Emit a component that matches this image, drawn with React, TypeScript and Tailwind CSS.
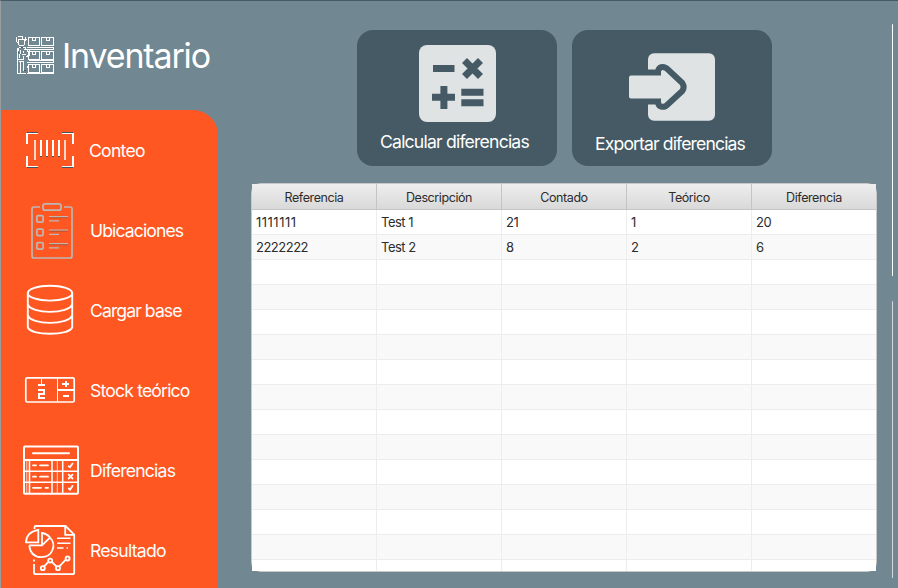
import type { ReactNode } from "react";

function WarehouseIcon() {
  const boxes = [37, 51, 64];
  return (
    <svg width="40" height="40" viewBox="15 35 40 40" fill="none" stroke="white" strokeWidth="1" shapeRendering="crispEdges" className="mb-[2px] shrink-0">
      {boxes.map((y) => (
        <g key={y}>
          <path d={`M28.5 ${y + 0.5}H39.5V${y + 8.5}H28.5ZM32.5 ${y + 0.5}V${y + 3.5}H35.5V${y + 0.5}`} />
          <path d={`M41.5 ${y + 0.5}H53.5V${y + 8.5}H41.5ZM46.5 ${y + 0.5}V${y + 3.5}H49.5V${y + 0.5}`} />
        </g>
      ))}
      <path d="M27 47.5H54M27 49.5H54M53.5 47V49M29 60.5H54M27 62.5H54M53.5 60V62M27 73.5H54" />
      <path d="M18 36.5H23M16.5 37V42M22.5 37V39M18 39.5H27M25.5 37V41M18.5 40V45M24.5 40V45M19 45.5H24M17 42.5H18M19 47.5H26M17.5 48V73M18.5 48V51M25.5 48V50M20.5 50V54M22 54.5H26M27.5 49V52M29.5 50V55M23.5 51V53M26 56.5H29M23.5 56V59M18 59.5H24M20.5 62V73M23.5 62V71M17 73.5H26M19 61.5H24" />
      <path d="M24 49.5H28M27 55.5H30M19.5 54V58M27.5 66V68" />
      <path stroke="#455a64" d="M24 70.5H26M21 47.5H23M18 52.5H19" />
    </svg>
  );
}

function ItemIcon({ children }: { children: ReactNode }) {
  return (
    <svg width="60" height="80" viewBox="20 0 60 80" fill="none" stroke="white" className="shrink-0">
      {children}
    </svg>
  );
}

const barcode = (
  <g shapeRendering="crispEdges">
    <path strokeWidth="1" stroke="#3f555f" d="M27 22.5H38M62 22.5H73M27 57.5H38M62 57.5H73M40 46.5H42M46 46.5H48M52 46.5H54M58 46.5H60" />
    <path strokeWidth="1" d="M27 23.5H38M62 23.5H73M27 56.5H38M62 56.5H73" />
    <path strokeWidth="2" d="M27 23V34M73 23V34M27 46V57M73 46V57M41 30V46M47 30V46M53 30V46M59 30V46" />
    <path strokeWidth="2" stroke="#ffd8cb" d="M35 30V50M65 30V50" />
  </g>
);

const clipboard = (
  <g stroke="#bdb8b5" strokeWidth="1.7">
    <path d="M40 17H34Q32 17 32 19V66Q32 68 34 68H70Q72 68 72 66V19Q72 17 70 17H64" />
    <rect x="43" y="13.8" width="18" height="6.4" rx="2" />
    {[25.7, 39.2, 52.7].map((y) => (
      <g key={y}>
        <rect x="36.9" y={y} width="6.2" height="6.4" rx="1.2" />
        <path strokeWidth="1.3" d={`M49 ${y + 1}H68M49 ${y + 5.2}H59`} />
        <path stroke="#8a4a35" strokeWidth="0.6" d={`M49 ${y + 2}H68`} />
      </g>
    ))}
  </g>
);

const database = (
  <g strokeWidth="1.9">
    <ellipse cx="50" cy="23.2" rx="22.2" ry="7.4" />
    <path d="M27.8 23V57C29 66 71 66 72.2 57V23M27.8 34C30 44.5 70 44.5 72.2 34M27.8 45C30 55.5 70 55.5 72.2 45" />
  </g>
);

const stock = (
  <g>
    <rect x="25.8" y="27.8" width="48.4" height="24.2" rx="1.5" strokeWidth="1.7" />
    <path strokeWidth="1" shapeRendering="crispEdges" d="M57.5 28V52" />
    <path strokeWidth="2" shapeRendering="crispEdges" d="M58 40H74" />
    <path strokeWidth="2" shapeRendering="crispEdges" d="M62 34H69M66 31V37M63 46H69" />
    <path strokeWidth="1" shapeRendering="crispEdges" d="M41.5 29V34" />
    <path strokeWidth="2" shapeRendering="crispEdges" d="M38 35H45M38 40H44M44 39V45M39 43V49M38 44H45M38 48H45" />
  </g>
);

const sheet = (
  <g strokeWidth="1.5" strokeLinecap="round">
    <rect x="24" y="16.5" width="54" height="47.2" rx="1" strokeWidth="2" />
    <path strokeWidth="2" d="M33 23.2H69M24 30H78" />
    <path strokeWidth="1.6" d="M24 41.3H78M24 52.3H78" />
    <path d="M29.5 30V63M52 30V63M62.7 30V63" />
    <path strokeWidth="1" opacity=".7" d="M57.3 30V63M26.8 30V63" />
    <path strokeWidth="1.8" d="M33 35.3H36M40 35.3H48M33 46.7H36M40 46.7H48M33 57.8H41M45.5 57.8H48" />
    <path strokeWidth="1.8" d="M68.7 36.2L70 37.2L72.5 33.6M68.7 58.5L70 59.6L72.5 56M68.7 44.7L72.5 48.5M72.5 44.7L68.7 48.5" />
  </g>
);

const report = (
  <g strokeWidth="1.8">
    <path d="M34.5 19V17.5Q34.5 16 36 16H65.5L74.2 24.7V62.5Q74.2 64.2 72.5 64.2H36Q34 64.2 34 62.5V54M34 49.5V51.5M65.2 16V24.8H74" />
    <path fill="#ff5722" d="M38.3 32.3H26Q26.2 22.2 38.3 19.8Z" />
    <path d="M29.2 35.3Q30.5 47 41.5 47.2C52.5 46.8 57 35 50 27.5L42 35.3H29.2M42 35.3V23Q46.5 23.4 50 27.5" />
    <path strokeWidth="1.6" d="M57 28.2H70.5M57 33.2H70.5M57 38H63.5M66.5 38H68" />
    <path d="M44 56.6L48.8 51.4M51.6 51.6L56.8 56.9M59.2 56.6L66.3 49.2" />
    <circle cx="42.8" cy="58.2" r="2" />
    <circle cx="50.2" cy="50.6" r="2" />
    <circle cx="58" cy="58.2" r="2" />
    <circle cx="67.6" cy="48.5" r="2" />
  </g>
);

const items = [
  { label: "Conteo", icon: barcode, text: "pl-[9px] tracking-[-0.75px]" },
  { label: "Ubicaciones", icon: clipboard, text: "pl-[10px] tracking-[-0.9px]" },
  { label: "Cargar base", icon: database, text: "pl-[10px] tracking-[-0.92px]" },
  { label: "Stock teórico", icon: stock, text: "pl-[10px] tracking-[-0.82px]" },
  { label: "Diferencias", icon: sheet, text: "pl-[10px] tracking-[-0.77px]" },
  { label: "Resultado", icon: report, text: "pl-[10px] tracking-[-0.75px]" },
];

const columns = ["Referencia", "Descripción", "Contado", "Teórico", "Diferencia"];
const rows = [
  ["1111111", "Test 1", "21", "1", "20"],
  ["2222222", "Test 2", "8", "2", "6"],
  ...Array.from({ length: 13 }, () => ["", "", "", "", ""]),
];

function CalculatorIcon() {
  return (
    <svg width="100" height="100" viewBox="407 30 100 100" className="shrink-0">
      <rect x="419" y="45" width="77" height="77" rx="8" fill="#dfe3e4" />
      <g stroke="#455a64" strokeWidth="7">
        <path d="M433 68.5H454.5M432 97.3H455M443.9 86V109M461.3 92.3H483.5M461.3 102.7H483.5M464.5 60.5L480.5 76.5M480.5 60.5L464.5 76.5" />
      </g>
    </svg>
  );
}

function ExportIcon() {
  const arrow =
    "M631 75.6H661V71.5Q661.5 69 664.5 70.5L680 85Q681.2 87 680 89L664.5 103.3Q661.5 104.8 661 102.3V98.4H631Q629 98.4 629 96.4V77.6Q629 75.6 631 75.6Z";
  return (
    <svg width="100" height="100" viewBox="622 30 100 100" className="shrink-0">
      <rect x="648" y="53.2" width="67" height="67.5" rx="6" fill="#dfe3e4" />
      <path d={arrow} fill="#455a64" stroke="#455a64" strokeWidth="12" strokeLinejoin="round" />
      <path d={arrow} fill="#dfe3e4" />
    </svg>
  );
}

export default function App() {
  return (
    <div className="flex h-[588px] w-[898px] overflow-hidden border-t border-l border-t-[#455a64] border-l-[#9a9d9e] bg-[#718792] font-['Inter',sans-serif]">
      <aside className="flex w-[217px] shrink-0 flex-col">
        <header className="flex h-[109px] shrink-0 items-center pl-[14px]">
          <WarehouseIcon />
          <h1 className="pl-[7px] text-[34px] leading-[40px] tracking-[-1.15px] whitespace-nowrap text-white">Inventario</h1>
        </header>
        <nav className="flex h-[480px] shrink-0 flex-col rounded-tr-[25px] bg-[#ff5722]">
          {items.map((item) => (
            <button key={item.label} className="flex h-20 shrink-0 items-center pl-[19px] text-left">
              <ItemIcon>{item.icon}</ItemIcon>
              <span className={`pt-[2px] text-[17.6px] leading-6 whitespace-nowrap text-white ${item.text}`}>{item.label}</span>
            </button>
          ))}
        </nav>
      </aside>

      <main className="flex w-[658px] shrink-0 flex-col pt-[29px] pl-[34px]">
        <div className="flex gap-[15px] pl-[105px]">
          <button className="flex h-[136px] w-[200px] shrink-0 flex-col items-center rounded-[16px] bg-[#455a64]">
            <CalculatorIcon />
            <span className="pr-[5px] text-[17.6px] leading-6 tracking-[-0.8px] whitespace-nowrap text-white">Calcular diferencias</span>
          </button>
          <button className="flex h-[136px] w-[200px] shrink-0 flex-col items-center rounded-[16px] bg-[#455a64]">
            <ExportIcon />
            <span className="pt-[2px] pr-[4px] text-[17.6px] leading-6 tracking-[-0.88px] whitespace-nowrap text-white">Exportar diferencias</span>
          </button>
        </div>

        <div className="mt-[17px] -ml-px h-[389px] w-[626px] shrink-0 rounded-[10px] border border-[#c8c8c8] text-[13px] text-[#2c2c2c]">
          <div className="h-[387px] w-[624px] overflow-hidden bg-white">
            <div className="grid h-[26px] w-[625px] grid-cols-[repeat(5,125px)] border-b border-[#c4c4c4] bg-linear-to-b from-[#eeeeee] to-[#d9d9d9] text-[12.5px]">
              {columns.map((c) => (
                <div key={c} className="flex items-center justify-center border-r border-[#c4c4c4] pt-[3px] tracking-[-0.42px]">
                  {c}
                </div>
              ))}
            </div>
            {rows.map((row, i) => (
              <div key={i} className="grid h-[25px] w-[625px] grid-cols-[repeat(5,125px)] border-b border-[#ededed] odd:bg-[#f9f9f9] even:bg-white">
                {row.map((cell, j) => (
                  <div
                    key={j}
                    className={`flex items-center border-r border-[#ededed] pt-px pl-[4px] ${cell === "1111111" ? "tracking-[0.5px]" : "tracking-[-0.5px]"}`}
                  >
                    {cell}
                  </div>
                ))}
              </div>
            ))}
          </div>
        </div>
      </main>

      <div className="flex flex-col gap-[25px] pt-[23px] pl-[16px]">
        <div className="h-[252px] w-px rounded-full bg-white" />
        <div className="h-[277px] w-px rounded-full bg-[#d5d8da]" />
      </div>
    </div>
  );
}
